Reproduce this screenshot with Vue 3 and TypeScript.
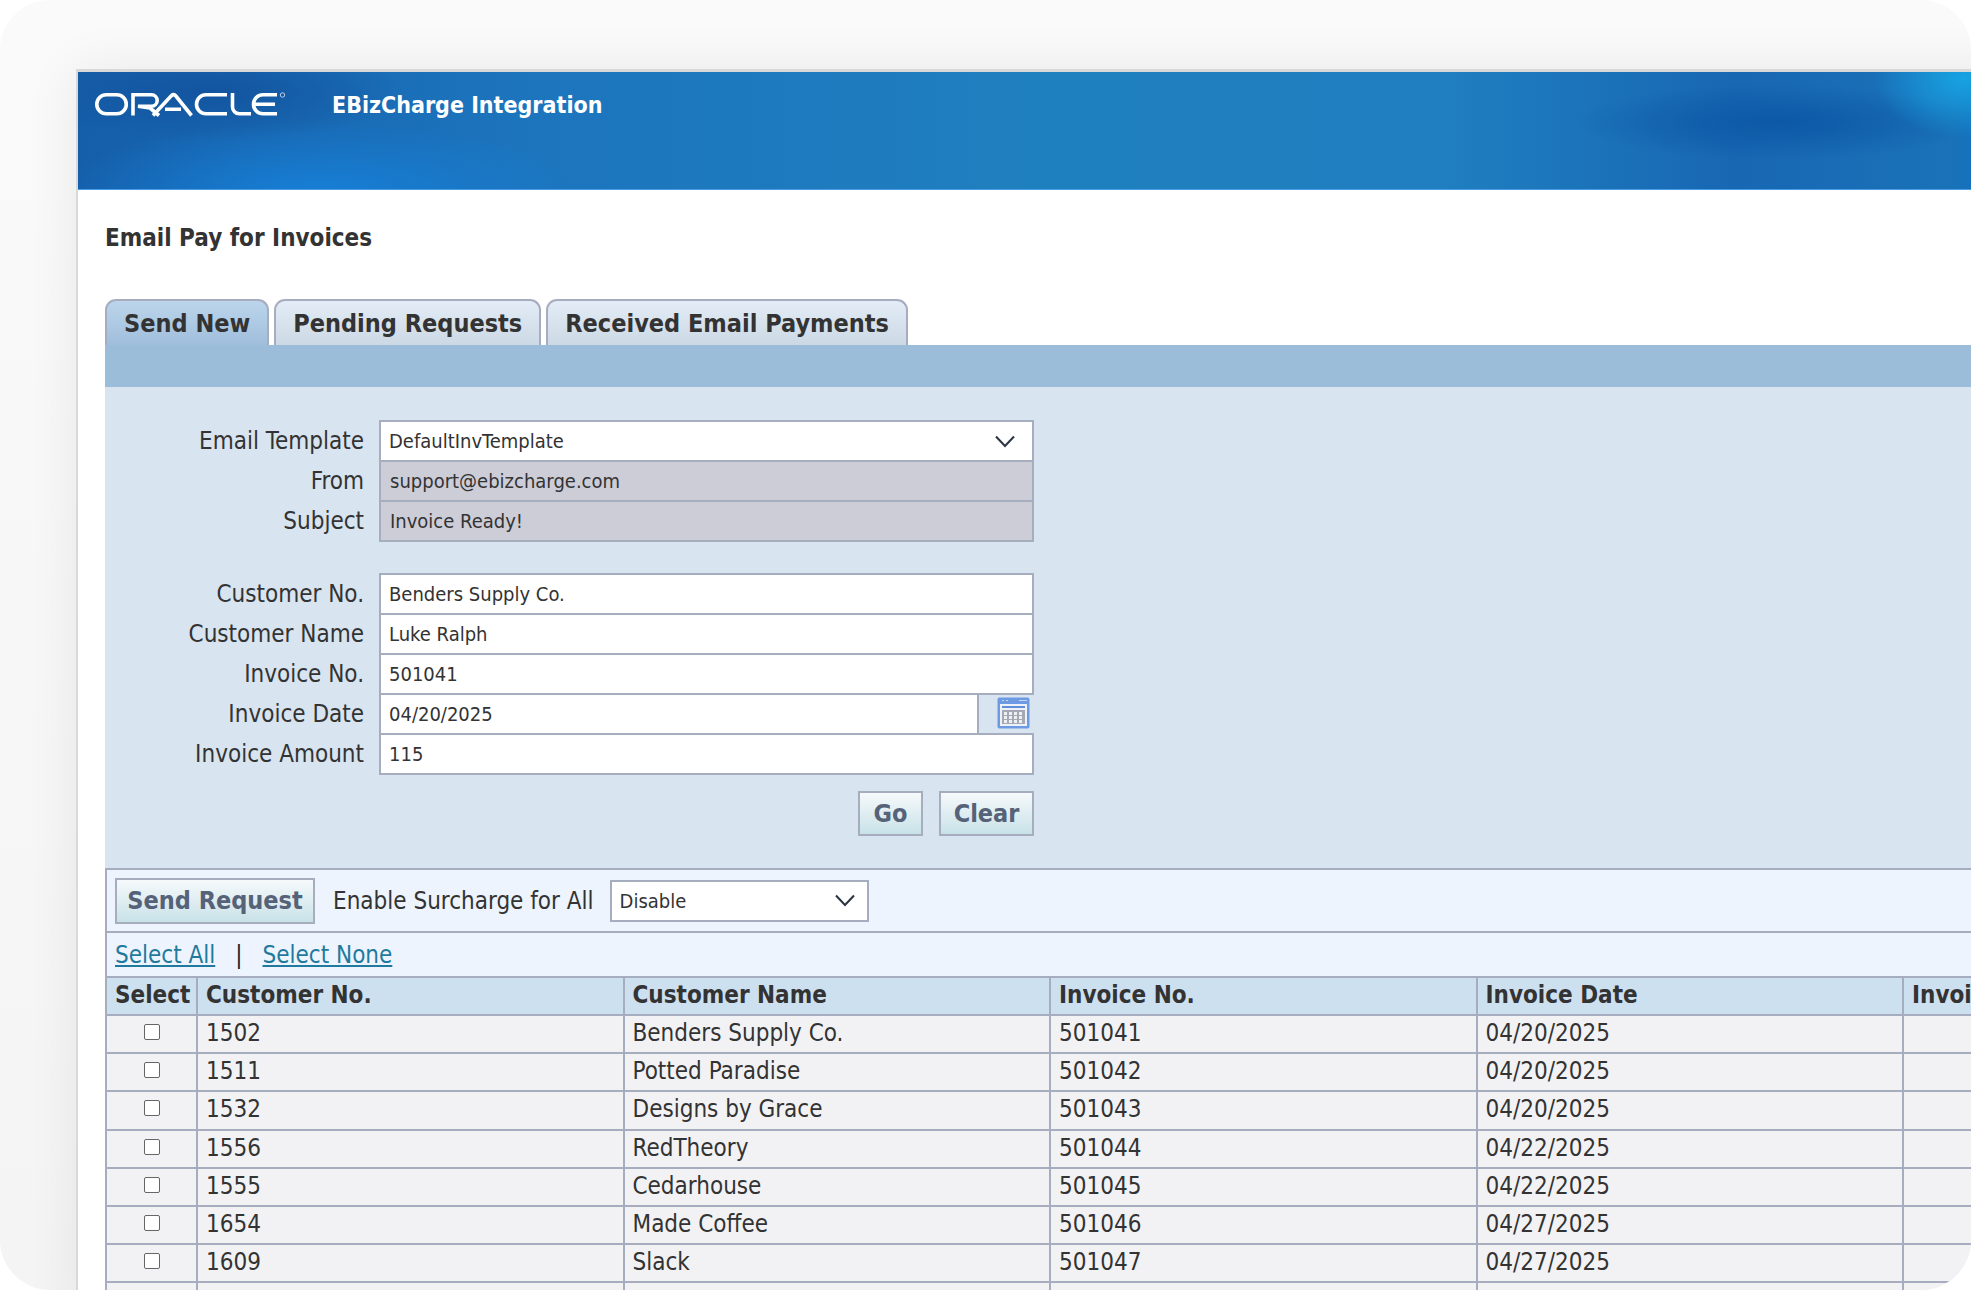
<script setup lang="ts">
interface Row { no: string; name: string; inv: string; date: string }
const rows: Row[] = [
  { no: '1502', name: 'Benders Supply Co.', inv: '501041', date: '04/20/2025' },
  { no: '1511', name: 'Potted Paradise', inv: '501042', date: '04/20/2025' },
  { no: '1532', name: 'Designs by Grace', inv: '501043', date: '04/20/2025' },
  { no: '1556', name: 'RedTheory', inv: '501044', date: '04/22/2025' },
  { no: '1555', name: 'Cedarhouse', inv: '501045', date: '04/22/2025' },
  { no: '1654', name: 'Made Coffee', inv: '501046', date: '04/27/2025' },
  { no: '1609', name: 'Slack', inv: '501047', date: '04/27/2025' },
]
const tabs = ['Send New', 'Pending Requests', 'Received Email Payments']
const topFields = [
  { label: 'From', value: 'support@ebizcharge.com' },
  { label: 'Subject', value: 'Invoice Ready!' },
]
const customerFields = [
  { label: 'Customer No.', value: 'Benders Supply Co.' },
  { label: 'Customer Name', value: 'Luke Ralph' },
  { label: 'Invoice No.', value: '501041' },
]
</script>

<template>
  <div class="card">
    <div class="window">
      <header class="banner">
        <svg class="logo" width="194" height="26" viewBox="0 0 194 26" aria-label="Oracle logo">
          <g fill="none" stroke="#fff" stroke-width="3.6">
            <rect x="1.8" y="3.8" width="29.5" height="19" rx="9.5" />
            <path d="M38 24.5V3.8H56.5a5.6 5.6 0 0 1 0 11.4H43L55 17l9 7.5" />
            <path d="M58 24.5L76.5 4.6Q78.5 2.8 80.5 4.6L96.5 24.5" />
            <path d="M70 18.2H86" />
            <path d="M132 3.8H111a9.5 9.5 0 0 0 0 19H132" />
            <path d="M137.500 2V16a6.800 6.800 0 0 0 6.800 6.800H156" />
            <path d="M182 3.800H168a9.500 9.500 0 0 0 0 19H182M159.500 13.300H180" />
          </g>
          <circle cx="187.500" cy="4" r="2.200" fill="none" stroke="#dbe9f5" stroke-width="0.800" />
        </svg>
        <span class="product">EBizCharge Integration</span>
      </header>

      <main class="content">
        <h1 class="page-title">Email Pay for Invoices</h1>
        <nav class="tabs">
          <div v-for="(tab, i) in tabs" :key="tab" class="tab" :class="{ active: i === 0 }">{{ tab }}</div>
        </nav>
        <div class="tab-bar"></div>

        <section class="form-panel">
          <div class="field-group">
            <div class="field">
              <label class="label">Email Template</label>
              <div class="input select-input">
                <span>DefaultInvTemplate</span>
                <svg class="chevron" width="20" height="13" viewBox="0 0 20 13"><path d="M1 1.500L10 11L19 1.500" fill="none" stroke="#2b3440" stroke-width="2" /></svg>
              </div>
            </div>
            <div v-for="f in topFields" :key="f.label" class="field">
              <label class="label">{{ f.label }}</label>
              <div class="input readonly">{{ f.value }}</div>
            </div>
          </div>

          <div class="field-group second">
            <div v-for="f in customerFields" :key="f.label" class="field">
              <label class="label">{{ f.label }}</label>
              <div class="input">{{ f.value }}</div>
            </div>
            <div class="field">
              <label class="label">Invoice Date</label>
              <div class="input date-input">04/20/2025</div>
              <div class="date-button">
                <svg width="33" height="32" viewBox="0 0 33 32">
                  <rect x="0.500" y="0.500" width="32" height="31" rx="2" fill="#6d9be3" />
                  <rect x="3" y="7" width="27" height="22" fill="#eef2f8" />
                  <rect x="5" y="9" width="23" height="2" fill="#5f8fd8" />
                  <rect x="5" y="13" width="23" height="14" fill="#a4a9b4" />
                  <g fill="#eef0f4">
                    <rect x="7" y="15" width="3" height="3" /><rect x="12" y="15" width="3" height="3" /><rect x="17" y="15" width="3" height="3" /><rect x="22" y="15" width="3" height="3" />
                    <rect x="7" y="19" width="3" height="3" /><rect x="12" y="19" width="3" height="3" /><rect x="17" y="19" width="3" height="3" /><rect x="22" y="19" width="3" height="3" />
                    <rect x="7" y="23" width="3" height="3" /><rect x="12" y="23" width="3" height="3" /><rect x="17" y="23" width="3" height="3" /><rect x="22" y="23" width="3" height="3" />
                  </g>
                  <g fill="#c5d8f5"><rect x="5" y="3" width="2" height="1" /><rect x="9" y="3" width="2" height="1" /><rect x="22" y="3" width="8" height="1" /></g>
                </svg>
              </div>
            </div>
            <div class="field">
              <label class="label">Invoice Amount</label>
              <div class="input">115</div>
            </div>
          </div>

          <div class="form-actions">
            <button class="btn go">Go</button>
            <button class="btn clear">Clear</button>
          </div>
        </section>

        <section class="results">
          <div class="toolbar">
            <button class="btn send">Send Request</button>
            <span class="surcharge-label">Enable Surcharge for All</span>
            <div class="input select-input surcharge-select">
              <span>Disable</span>
              <svg class="chevron" width="20" height="13" viewBox="0 0 20 13"><path d="M1 1.500L10 11L19 1.500" fill="none" stroke="#2b3440" stroke-width="2" /></svg>
            </div>
          </div>
          <div class="select-links">
            <a class="link">Select All</a>
            <span class="sep">|</span>
            <a class="link">Select None</a>
          </div>
          <div class="table">
            <div class="tr head">
              <div class="td">Select</div>
              <div class="td">Customer No.</div>
              <div class="td">Customer Name</div>
              <div class="td">Invoice No.</div>
              <div class="td">Invoice Date</div>
              <div class="td">Invoice Amount</div>
            </div>
            <div v-for="r in rows" :key="r.inv" class="tr">
              <div class="td check-cell"><span class="checkbox"></span></div>
              <div class="td">{{ r.no }}</div>
              <div class="td">{{ r.name }}</div>
              <div class="td">{{ r.inv }}</div>
              <div class="td">{{ r.date }}</div>
              <div class="td"></div>
            </div>
            <div class="tr">
              <div class="td"></div><div class="td"></div><div class="td"></div><div class="td"></div><div class="td"></div><div class="td"></div>
            </div>
          </div>
        </section>
      </main>
    </div>
  </div>
</template>

<style scoped>
.card {
  width: 1971px;
  height: 1290px;
  overflow: hidden;
  border-radius: 50px;
  background: linear-gradient(180deg, #fafafa 0%, #f4f4f4 100%);
  box-sizing: border-box;
  padding: 69px 0 0 76px;
  font-family: "DejaVu Sans", "Liberation Sans", sans-serif;
  font-stretch: condensed;
  color: #333;
}
.window {
  width: 1950px;
  background: #fff;
  border-top: 3px solid #d9d9d9;
  border-left: 2px solid #d9d9d9;
  box-shadow: 0 0 50px rgba(0, 0, 0, 0.07);
}
.banner {
  height: 118px;
  box-sizing: border-box;
  border-bottom: 1px solid #4a9ce4;
  display: flex;
  align-items: flex-start;
  padding: 19px 0 0 17px;
  background:
    radial-gradient(ellipse 90px 60px at 1885px 6px, #17a3e3 0%, rgba(23, 163, 227, 0) 100%),
    radial-gradient(ellipse 200px 38px at 1700px 50px, #0c58a6 0%, rgba(12, 88, 166, 0) 100%),
    radial-gradient(ellipse 260px 70px at 240px 120px, #177fd6 0%, rgba(23, 127, 214, 0) 100%),
    radial-gradient(ellipse 200px 50px at 130px 20px, #13549f 0%, rgba(19, 84, 159, 0) 100%),
    linear-gradient(90deg, #155ea9 0%, #1c74bd 22%, #1f80bf 50%, #1f7fc0 70%, #1867b3 85%, #1a72b8 96%, #0771c6 100%);
}
.logo {
  display: block;
  flex: none;
}
.product {
  margin-left: 43px;
  font-size: 23px;
  line-height: 28px;
  font-weight: 700;
  color: #fff;
}
.content {
  padding: 0 0 0 27px;
}
.page-title {
  margin: 0;
  padding: 33px 0 46px;
  font-size: 24px;
  line-height: 30px;
  font-weight: 700;
  color: #333;
}
.tabs {
  display: flex;
  gap: 5px;
  height: 46px;
}
.tab {
  box-sizing: border-box;
  height: 46px;
  padding: 8px 17px 0;
  border: 2px solid #a6adbe;
  border-bottom: 0;
  border-radius: 11px 11px 0 0;
  font-size: 25px;
  line-height: 30px;
  font-weight: 700;
  color: #333;
  background: linear-gradient(180deg, #e4edf7 0%, #ccd8e4 100%);
}
.tab.active {
  background: linear-gradient(180deg, #bcd5ec 0%, #a0bedb 100%);
}
.tab-bar {
  height: 42px;
  background: #9cbdda;
}
.form-panel {
  background: #d8e4f0;
  padding: 33px 0 32px;
}
.field-group.second {
  margin-top: 31px;
}
.field {
  display: flex;
  align-items: stretch;
  height: 42px;
  margin-top: -2px;
}
.field-group > .field:first-child {
  margin-top: 0;
}
.label {
  width: 259px;
  flex: none;
  text-align: right;
  font-size: 24px;
  line-height: 42px;
  color: #333;
}
.input {
  box-sizing: border-box;
  margin-left: 15px;
  width: 655px;
  height: 42px;
  padding: 0 8px;
  border: 2px solid #a6adbe;
  background: #fff;
  font-size: 20px;
  line-height: 38px;
  color: #333;
}
.readonly {
  background: #cdcdd8;
  padding-left: 9px;
}
.select-input {
  display: flex;
  align-items: center;
  justify-content: space-between;
  padding-right: 17px;
}
.date-input {
  width: 600px;
}
.date-button {
  width: 55px;
  height: 40px;
  display: flex;
  justify-content: flex-end;
  align-items: center;
  box-sizing: border-box;
  padding-right: 4px;
  border-left: 0;
}
.form-actions {
  width: 929px;
  display: flex;
  justify-content: flex-end;
  gap: 16px;
  margin-top: 16px;
}
.btn {
  box-sizing: border-box;
  height: 45px;
  padding: 0;
  border: 2.500px solid #a6adbe;
  background: linear-gradient(180deg, #f6f9fb 0%, #c8e2e8 100%);
  font-family: inherit;
  font-stretch: condensed;
  font-size: 25px;
  font-weight: 700;
  color: #556278;
}
.go { width: 65px; }
.clear { width: 95px; }
.send { width: 200px; height: 46px; }
.results {
  background: #edf4fd;
  border-top: 2px solid #a6adbe;
  border-left: 2px solid #a6adbe;
}
.toolbar {
  height: 63px;
  box-sizing: border-box;
  display: flex;
  align-items: center;
  padding-left: 8px;
  border-bottom: 2px solid #a6adbe;
}
.surcharge-label {
  margin-left: 18px;
  font-size: 24px;
  color: #333;
}
.surcharge-select {
  width: 259px;
  margin-left: 16px;
  padding-right: 12px;
  height: 42px;
}
.select-links {
  height: 43px;
  display: flex;
  align-items: center;
  padding-left: 8px;
  font-size: 24px;
}
.link {
  color: #1f7a9e;
  text-decoration: underline;
}
.sep {
  margin: 0 20px;
  color: #222;
}
.tr {
  display: grid;
  grid-template-columns: 89px 426.500px 426.500px 426.500px 426.500px 200px;
  height: 38.150px;
  box-sizing: border-box;
  border-top: 2px solid #a6adbe;
  background: #f2f2f5;
}
.tr.head {
  background: #cde0f0;
  font-weight: 700;
}
.td {
  box-sizing: border-box;
  padding-left: 8px;
  font-size: 24px;
  line-height: 34px;
  white-space: nowrap;
  overflow: hidden;
  color: #333;
}
.td + .td {
  border-left: 2px solid #a6adbe;
}
.check-cell {
  display: flex;
  align-items: center;
  justify-content: center;
  padding-left: 0;
}
.checkbox {
  width: 16px;
  height: 16px;
  box-sizing: border-box;
  border: 1.500px solid #666;
  border-radius: 2px;
  background: #fff;
  margin-bottom: 4px;
}
</style>

<style>
html, body {
  margin: 0;
  background: #fff;
}
</style>
